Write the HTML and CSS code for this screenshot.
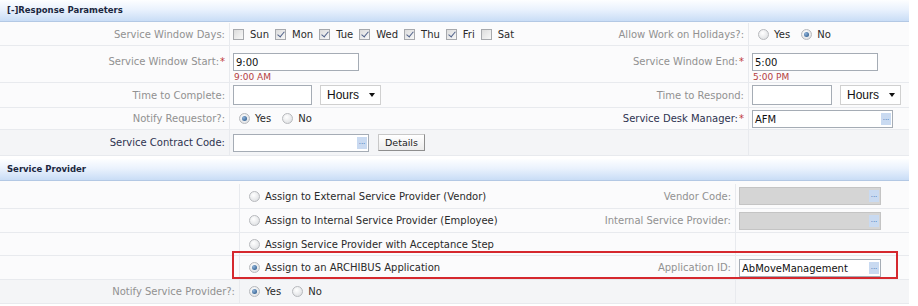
FILE: index.html
```html
<!DOCTYPE html>
<html lang="en">
<head>
  <meta charset="UTF-8" />
  <title>Response Parameters</title>
  <link rel="stylesheet" href="styles.css">
</head>
<body>
  <section class="panel">
    <div class="panel-head">[-]Response Parameters</div>
    <div class="form-grid grid-resp">
      <!-- row 1 -->
      <div class="lbl">Service Window Days:</div>
      <div class="val days">
        <span class="chk"></span><span class="opt">Sun</span>
        <span class="chk on"></span><span class="opt">Mon</span>
        <span class="chk on"></span><span class="opt">Tue</span>
        <span class="chk on"></span><span class="opt">Wed</span>
        <span class="chk on"></span><span class="opt">Thu</span>
        <span class="chk on"></span><span class="opt">Fri</span>
        <span class="chk"></span><span class="opt">Sat</span>
      </div>
      <div class="lbl">Allow Work on Holidays?:</div>
      <div class="val">
        <span class="rad"></span><span class="opt">Yes</span>
        <span class="rad on"></span><span class="opt">No</span>
      </div>

      <!-- row 2 -->
      <div class="lbl top">Service Window Start:<em>*</em></div>
      <div class="val stack">
        <div class="txt w126">9:00</div>
        <div class="hint">9:00 AM</div>
      </div>
      <div class="lbl top">Service Window End:<em>*</em></div>
      <div class="val stack">
        <div class="txt w126">5:00</div>
        <div class="hint">5:00 PM</div>
      </div>

      <!-- row 3 -->
      <div class="lbl">Time to Complete:</div>
      <div class="val">
        <div class="txt w79"></div>
        <div class="sel">Hours <span class="caret"></span></div>
      </div>
      <div class="lbl">Time to Respond:</div>
      <div class="val">
        <div class="txt w80"></div>
        <div class="sel">Hours <span class="caret"></span></div>
      </div>

      <!-- row 4 -->
      <div class="lbl">Notify Requestor?:</div>
      <div class="val">
        <span class="rad on"></span><span class="opt">Yes</span>
        <span class="rad"></span><span class="opt">No</span>
      </div>
      <div class="lbl dark">Service Desk Manager:<em>*</em></div>
      <div class="val">
        <div class="txt lookup w141">AFM<span class="dots">...</span></div>
      </div>

      <!-- row 5 -->
      <div class="lbl dark shade">Service Contract Code:</div>
      <div class="val shade">
        <div class="txt lookup w135"><span class="dots">...</span></div>
        <div class="btn">Details</div>
      </div>
      <div class="lbl shade"></div>
      <div class="val shade"></div>
    </div>
  </section>

  <section class="panel">
    <div class="panel-head">Service Provider</div>
    <div class="form-grid grid-prov">
      <div class="lbl"></div>
      <div class="val"><span class="rad"></span><span class="opt">Assign to External Service Provider (Vendor)</span></div>
      <div class="lbl">Vendor Code:</div>
      <div class="val"><div class="txt lookup off w142"><span class="dots">...</span></div></div>

      <div class="lbl"></div>
      <div class="val"><span class="rad"></span><span class="opt">Assign to Internal Service Provider (Employee)</span></div>
      <div class="lbl">Internal Service Provider:</div>
      <div class="val"><div class="txt lookup off w142"><span class="dots">...</span></div></div>

      <div class="lbl"></div>
      <div class="val"><span class="rad"></span><span class="opt">Assign Service Provider with Acceptance Step</span></div>
      <div class="lbl"></div>
      <div class="val"></div>

      <div class="lbl"></div>
      <div class="val"><span class="rad on"></span><span class="opt">Assign to an ARCHIBUS Application</span></div>
      <div class="lbl">Application ID:</div>
      <div class="val"><div class="txt lookup w142">AbMoveManagement<span class="dots">...</span></div></div>

      <div class="lbl shade">Notify Service Provider?:</div>
      <div class="val shade">
        <span class="rad on"></span><span class="opt">Yes</span>
        <span class="rad"></span><span class="opt">No</span>
      </div>
      <div class="lbl shade"></div>
      <div class="val shade"></div>

      <div class="highlight"></div>
    </div>
  </section>
</body>
</html>
```

FILE: styles.css
```css
body {
  margin: 0;
  background: #ffffff;
  font-family: "DejaVu Sans", Verdana, sans-serif;
  font-size: 10px;
  color: #222;
}
.panel {
  width: 909px;
  background: #fbfbfc;
}
.panel + .panel {
  margin-top: 3px;
}
.panel-head {
  height: 21px;
  line-height: 21px;
  padding-left: 7px;
  font-weight: bold;
  font-size: 8.5px;
  color: #1b2740;
  background: linear-gradient(#fdfeff, #eaf2fd 45%, #c9ddf6);
  border-bottom: 1px solid #b3c8e4;
}
.form-grid {
  display: grid;
  position: relative;
}
.grid-resp {
  grid-template-columns: 229px 288px 231px 161px;
  grid-template-rows: 23px 37px 25px 22px 26px;
  padding-top: 1px;
}
.grid-prov {
  grid-template-columns: 239px 253px 243px 174px;
  grid-template-rows: 25px 24px 23px 24px 24px;
  padding-top: 3px;
}
.lbl, .val {
  display: flex;
  align-items: center;
  border-bottom: 1px solid #e8eaee;
}
.lbl {
  justify-content: flex-end;
  padding-right: 4px;
  color: #919191;
  white-space: nowrap;
}
.val {
  border-left: 1px solid #e8eaee;
  padding-left: 3px;
  gap: 5px;
}
.lbl.dark {
  color: #2e3350;
}
.lbl em {
  font-style: normal;
  color: #c0393b;
  margin-left: 1px;
}
.lbl.top {
  align-items: flex-start;
  padding-top: 10px;
}
.shade {
  background: #f4f5f7;
}
.val.stack {
  flex-direction: column;
  align-items: flex-start;
  justify-content: flex-start;
  padding-top: 7px;
  gap: 1px;
}
.days {
  gap: 0;
}
.days .opt {
  margin: 0 6px 0 6px;
}
.opt {
  color: #2a2a2a;
  white-space: nowrap;
}
.chk {
  position: relative;
  width: 11px;
  height: 11px;
  box-sizing: border-box;
  border: 1px solid #a7a9ad;
  background: linear-gradient(135deg, #dcdcdc, #f8f8f8);
  flex: none;
}
.chk.on::after {
  content: "";
  position: absolute;
  left: 3px;
  top: 0px;
  width: 3px;
  height: 6px;
  border: solid #51628a;
  border-width: 0 1.5px 1.5px 0;
  transform: rotate(40deg);
}
.rad {
  position: relative;
  width: 11px;
  height: 11px;
  box-sizing: border-box;
  border-radius: 50%;
  border: 1px solid #b7b9bd;
  background: radial-gradient(circle at 40% 35%, #ffffff, #d8dadd);
  margin-left: 6px;
  flex: none;
}
.rad.on::after {
  content: "";
  position: absolute;
  left: 2px;
  top: 2px;
  width: 5px;
  height: 5px;
  border-radius: 50%;
  background: radial-gradient(circle at 35% 35%, #8fb3da, #1f4e80);
}
.txt {
  position: relative;
  height: 18px;
  box-sizing: border-box;
  border: 1px solid #a5acb5;
  background: #fff;
  padding: 3px 2px 0;
  color: #111;
  white-space: nowrap;
}
.txt.off {
  background: #d5d5d5;
  border-color: #c4c4c4;
}
.w79 { width: 79px; height: 20px; }
.w80 { width: 80px; height: 20px; }
.w126 { width: 126px; height: 19px; }
.w135 { width: 136px; }
.w141 { width: 141px; }
.w142 { width: 142px; }
.dots {
  position: absolute;
  right: 1px;
  top: 2px;
  width: 10px;
  height: 12px;
  background: #c9daf1;
  color: #3d6cb5;
  font-size: 7px;
  line-height: 10px;
  text-align: center;
  letter-spacing: 0;
  overflow: hidden;
}
.hint {
  color: #b5403f;
  font-size: 9px;
  padding-left: 1px;
}
.sel {
  display: flex;
  align-items: center;
  justify-content: space-between;
  width: 61px;
  height: 20px;
  box-sizing: border-box;
  border: 1px solid #d0d0d0;
  background: #fff;
  padding: 0 5px 0 6px;
  margin-left: 3px;
  font-family: "Liberation Sans", Arial, sans-serif;
  font-size: 12px;
  color: #111;
}
.caret {
  width: 0;
  height: 0;
  border-left: 3px solid transparent;
  border-right: 3px solid transparent;
  border-top: 4px solid #111;
}
.btn {
  height: 17px;
  line-height: 16px;
  box-sizing: border-box;
  padding: 0 6px;
  margin-left: 4px;
  border: 1px solid #c8c8c8;
  border-right-color: #8e8e8e;
  border-bottom-color: #8e8e8e;
  background: linear-gradient(#ffffff, #ececec);
  font-size: 9.5px;
  color: #222;
}
.highlight {
  position: absolute;
  left: 232px;
  top: 70px;
  width: 666px;
  height: 28px;
  box-sizing: border-box;
  border: 2.5px solid #d5282e;
  pointer-events: none;
}
```
